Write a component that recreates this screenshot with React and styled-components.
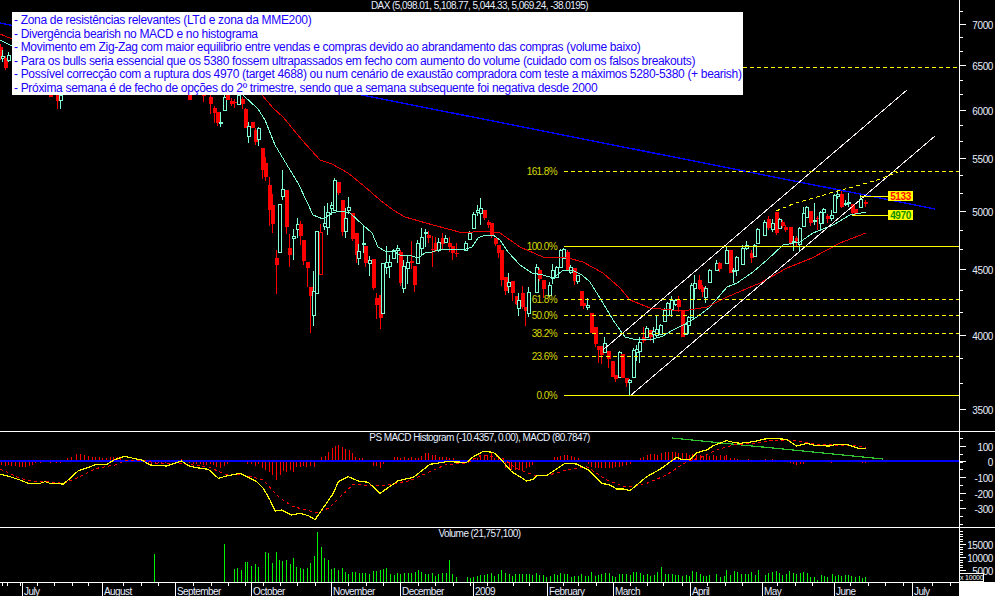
import React from "react";
import styled, { createGlobalStyle } from "styled-components";

const AQUA = "#7fffd4";
const RED = "#ff0000";
const YELLOW = "#ffff00";

const GlobalStyle = createGlobalStyle`
  html, body { margin: 0; padding: 0; background: #000; }
  body { font-family: "Liberation Sans", Arial, sans-serif; overflow: hidden; }
`;

const Page = styled.div`
  width: 995px;
  height: 596px;
  background: #000;
  display: flex;
  flex-direction: column;
  overflow: hidden;
`;
const Pane = styled.section`
  height: ${(p) => p.$height}px;
  display: flex;
  box-sizing: border-box;
  border-top: ${(p) => (p.$ruled ? "1px solid #fff" : "none")};
`;
const Plot = styled.div`
  position: relative;
  width: 959px;
  height: 100%;
`;
const ChartSvg = styled.svg`
  display: block;
  width: 959px;
  height: 100%;
  shape-rendering: crispEdges;
  font-family: "Liberation Sans", Arial, sans-serif;
`;
const AxisColumn = styled.div`
  position: relative;
  width: 36px;
  height: 100%;
  box-sizing: border-box;
  border-left: 1px solid #fff;
`;
const AxisSvg = styled.svg`
  display: block;
  width: 35px;
  height: 100%;
  shape-rendering: crispEdges;
  font-family: "Liberation Sans", Arial, sans-serif;
`;
const PaneTitle = styled.div`
  position: absolute;
  top: ${(p) => p.$top}px;
  left: 0;
  right: 0;
  text-align: center;
  color: #e6eeff;
  font-size: 10px;
  line-height: 12px;
  letter-spacing: -0.56px;
  white-space: nowrap;
`;
const NoteBox = styled.div`
  position: absolute;
  top: 12px;
  left: 12px;
  width: 731px;
  height: 83px;
  box-sizing: border-box;
  padding: 2px 0 0 2px;
  background: #fff;
  color: #1a00ff;
  font-size: 12px;
  line-height: 13.6px;
  letter-spacing: -0.32px;
  white-space: nowrap;
`;
const NoteLine = styled.div``;
const ScaleTag = styled.div`
  position: absolute;
  left: -1px;
  bottom: 0;
  width: 25px;
  height: 9px;
  box-sizing: border-box;
  border: 1px solid #fff;
  background: #000;
  color: #fff;
  font-size: 7px;
  line-height: 7px;
  letter-spacing: -0.2px;
  text-align: center;
  white-space: nowrap;
`;
const TimeRow = styled.div`
  height: 14px;
  display: flex;
`;
const TimeTrack = styled.div`
  width: 959px;
  border-top: 1px solid #fff;
  box-sizing: border-box;
`;
const Corner = styled.div`
  flex: 1;
  background: #fff;
`;
const TimeSvg = styled.svg`
  display: block;
  width: 959px;
  height: 13px;
  shape-rendering: crispEdges;
  font-family: "Liberation Sans", Arial, sans-serif;
`;

// kind, x, body top, body bottom, wick top, wick bottom (page pixels)
const candles = [
  ["r", 0, 47, 57, 44, 60], ["a", 2, 56, 58, 50, 62], ["r", 5, 58, 68, 56, 70], ["a", 8, 55, 60, 52, 62],
  ["r", 50, 95, 97, 95, 97], ["r", 57, 95, 101, 95, 109], ["a", 60, 95, 100, 95, 109],
  ["r", 189, 95, 100, 95, 100], ["r", 203, 95, 96, 95, 102],
  ["r", 210, 97, 104, 95, 114], ["r", 214, 108, 113, 106, 123], ["r", 217, 112, 123, 112, 126],
  ["a", 220, 122, 123, 112, 127], ["a", 224, 97, 110, 95, 111], ["r", 227, 95, 100, 95, 100],
  ["r", 231, 101, 104, 98, 106], ["r", 234, 102, 103, 99, 108], ["a", 238, 95, 104, 95, 105],
  ["r", 242, 99, 104, 97, 109], ["r", 245, 109, 128, 108, 128], ["a", 248, 126, 136, 122, 143],
  ["r", 252, 122, 128, 122, 128], ["r", 255, 130, 142, 128, 145], ["a", 258, 128, 139, 127, 146],
  ["r", 262, 148, 170, 148, 179], ["r", 265, 163, 177, 157, 181], ["r", 269, 185, 210, 177, 226],
  ["r", 272, 205, 224, 194, 233], ["r", 276, 258, 265, 250, 294], ["a", 279, 204, 252, 204, 252],
  ["a", 282, 189, 196, 170, 200], ["r", 286, 190, 227, 190, 234], ["r", 289, 248, 255, 234, 267],
  ["a", 293, 236, 238, 229, 260], ["a", 297, 224, 229, 218, 238], ["r", 300, 224, 236, 221, 245],
  ["r", 303, 240, 261, 240, 265], ["r", 307, 262, 268, 262, 287], ["r", 310, 287, 296, 287, 333],
  ["a", 313, 291, 315, 271, 326], ["a", 316, 231, 293, 231, 293], ["h", 320, 232, 274, 224, 274],
  ["a", 324, 223, 226, 206, 230], ["a", 327, 212, 227, 203, 235], ["a", 331, 205, 208, 202, 215],
  ["a", 334, 180, 210, 178, 211], ["r", 338, 182, 193, 182, 195], ["r", 342, 200, 232, 200, 236],
  ["a", 345, 218, 231, 208, 238], ["a", 348, 207, 210, 197, 214], ["r", 352, 213, 239, 213, 241],
  ["r", 356, 233, 255, 233, 263], ["a", 358, 251, 258, 244, 265], ["a", 363, 243, 244, 225, 253],
  ["r", 365, 246, 263, 246, 267], ["a", 369, 260, 263, 256, 276], ["r", 373, 259, 288, 259, 290],
  ["r", 376, 298, 305, 293, 319], ["r", 380, 295, 318, 295, 329], ["a", 382, 263, 313, 263, 313],
  ["a", 386, 262, 267, 246, 274], ["a", 389, 262, 266, 255, 278], ["a", 393, 250, 258, 249, 259],
  ["a", 397, 248, 250, 245, 263], ["r", 400, 252, 283, 250, 286], ["a", 403, 266, 288, 260, 293],
  ["a", 407, 262, 268, 256, 284], ["r", 411, 261, 263, 241, 269], ["r", 414, 266, 285, 266, 292],
  ["a", 417, 243, 263, 240, 264], ["a", 421, 237, 248, 228, 255], ["a", 425, 232, 233, 229, 247],
  ["r", 428, 235, 238, 231, 243], ["r", 432, 249, 250, 236, 267], ["r", 435, 243, 251, 237, 252],
  ["a", 438, 242, 250, 238, 252], ["r", 442, 238, 244, 233, 250], ["a", 445, 238, 242, 235, 243],
  ["r", 449, 243, 247, 237, 252], ["r", 452, 246, 253, 246, 260], ["r", 456, 253, 253, 243, 257],
  ["a", 465, 243, 250, 241, 251], ["a", 469, 233, 239, 231, 240], ["a", 473, 214, 228, 212, 229],
  ["a", 477, 210, 212, 205, 216], ["a", 480, 208, 213, 198, 225], ["r", 484, 210, 218, 210, 220],
  ["r", 488, 222, 225, 220, 228], ["r", 491, 223, 235, 223, 238], ["r", 495, 238, 244, 238, 246],
  ["r", 498, 245, 253, 245, 258], ["r", 501, 250, 280, 250, 286], ["r", 505, 277, 291, 277, 295],
  ["a", 508, 282, 286, 273, 293], ["r", 512, 281, 293, 281, 301], ["r", 516, 296, 304, 296, 305],
  ["a", 518, 300, 308, 293, 316], ["r", 522, 293, 307, 286, 309], ["r", 525, 307, 311, 307, 326],
  ["a", 528, 292, 313, 287, 317], ["a", 536, 267, 292, 264, 293], ["r", 539, 270, 279, 268, 281],
  ["r", 543, 280, 289, 280, 298], ["a", 549, 285, 295, 282, 297], ["a", 552, 270, 278, 264, 284],
  ["a", 556, 267, 277, 266, 278], ["a", 560, 250, 267, 249, 268], ["a", 563, 249, 258, 248, 259],
  ["r", 567, 252, 270, 250, 270], ["a", 570, 267, 272, 265, 274], ["r", 574, 268, 281, 268, 285],
  ["a", 577, 275, 281, 275, 284], ["r", 581, 291, 306, 291, 306], ["r", 583, 303, 306, 301, 309],
  ["a", 587, 305, 307, 298, 310], ["r", 591, 313, 333, 313, 333], ["r", 595, 327, 344, 327, 347],
  ["r", 598, 346, 350, 346, 363], ["r", 601, 346, 355, 346, 364], ["a", 604, 343, 352, 337, 353],
  ["r", 608, 351, 359, 351, 368], ["r", 612, 361, 377, 361, 377], ["r", 615, 375, 379, 375, 382],
  ["a", 619, 352, 377, 351, 378], ["r", 622, 354, 378, 354, 378], ["r", 626, 378, 383, 378, 387],
  ["a", 629, 380, 382, 379, 395], ["a", 633, 350, 377, 348, 378], ["a", 636, 349, 352, 345, 361],
  ["a", 639, 342, 351, 337, 363], ["r", 643, 337, 341, 327, 343], ["a", 646, 328, 337, 326, 338],
  ["r", 650, 330, 337, 330, 341], ["a", 653, 331, 334, 327, 343], ["a", 656, 329, 335, 316, 338],
  ["a", 660, 325, 334, 324, 335], ["a", 664, 310, 321, 308, 322], ["a", 667, 303, 315, 302, 316],
  ["a", 671, 300, 309, 296, 317], ["a", 675, 300, 304, 299, 306], ["r", 678, 300, 307, 296, 312],
  ["r", 682, 311, 337, 311, 337], ["a", 685, 324, 334, 323, 335], ["a", 688, 317, 325, 316, 334],
  ["a", 691, 285, 317, 283, 318], ["a", 694, 283, 288, 275, 300], ["r", 699, 280, 289, 275, 290],
  ["r", 702, 287, 292, 285, 297], ["a", 705, 288, 297, 286, 303], ["a", 709, 270, 282, 269, 283],
  ["a", 716, 263, 270, 260, 271], ["r", 719, 263, 269, 262, 272], ["a", 726, 250, 263, 247, 264],
  ["r", 730, 250, 273, 250, 273], ["a", 733, 270, 271, 268, 283], ["a", 736, 257, 270, 256, 276],
  ["a", 742, 248, 264, 245, 265], ["a", 746, 245, 248, 241, 250], ["r", 751, 253, 258, 250, 263],
  ["a", 754, 245, 256, 244, 257], ["a", 757, 229, 243, 228, 244], ["a", 764, 222, 235, 220, 236],
  ["r", 768, 219, 228, 216, 230], ["a", 772, 223, 229, 219, 232], ["r", 776, 212, 233, 212, 235],
  ["a", 779, 219, 228, 218, 229], ["r", 782, 222, 226, 220, 228], ["r", 785, 227, 230, 225, 232],
  ["r", 790, 227, 243, 227, 245], ["a", 793, 241, 242, 236, 251], ["r", 796, 238, 241, 236, 246],
  ["a", 799, 228, 244, 227, 251], ["a", 803, 213, 226, 207, 227], ["a", 806, 207, 217, 206, 218],
  ["r", 810, 211, 223, 211, 226], ["a", 814, 220, 221, 203, 225], ["r", 817, 218, 219, 216, 230],
  ["a", 820, 212, 223, 211, 230], ["a", 823, 209, 212, 208, 224], ["r", 827, 216, 219, 214, 223],
  ["a", 831, 215, 218, 210, 221], ["a", 834, 195, 212, 194, 213], ["a", 837, 194, 196, 190, 199],
  ["r", 841, 194, 207, 190, 208], ["a", 845, 203, 204, 200, 206], ["a", 848, 202, 203, 193, 207],
  ["r", 852, 204, 213, 204, 215], ["r", 855, 209, 214, 209, 216], ["a", 860, 199, 207, 195, 208],
  ["r", 865, 202, 204, 200, 207],
];

const aquaAverage = "0,40 12,46 243,95 258,109 265,120 275,145 287,165 298,183 307,202 313,215 323,219 332,213 340,211 350,213 363,225 372,233 378,247 385,251 393,251 400,255 412,256 418,258 425,253 432,252 442,249 463,250 472,247 478,238 485,235 493,235 500,240 508,252 520,265 532,273 543,275 553,278 562,271 572,270 582,275 590,282 603,303 613,320 625,337 633,339 653,339 663,336 673,330 683,325 697,317 710,307 727,287 737,283 753,272 767,260 783,245 800,242 813,233 833,225 850,215 866,212";
const redAverage = "0,34 12,39 262,95 273,108 283,117 302,140 320,160 332,164 348,173 364,186 380,200 393,210 405,217 433,225 463,233 483,231 500,233 520,247 543,257 568,258 583,262 603,273 620,288 630,300 650,308 683,311 707,307 727,297 760,283 787,268 812,258 840,243 866,233";
const resistanceCurve = "776,211 793,204 817,197 837,191 853,187 877,180 898,172";

const fibLevels = [
  { label: "161.8%", y: 171, dashed: true },
  { label: "100.0%", y: 246 },
  { label: "61.8%", y: 299, dashed: true },
  { label: "50.0%", y: 315, dashed: true },
  { label: "38.2%", y: 333, dashed: true },
  { label: "23.6%", y: 356, dashed: true },
  { label: "0.0%", y: 395 },
];

const notes = [
  "- Zona de resistências relevantes (LTd e zona da MME200)",
  "- Divergência bearish no MACD e no histograma",
  "- Movimento em Zig-Zag com maior equilibrio entre vendas e compras devido ao abrandamento das compras (volume baixo)",
  "- Para os bulls seria essencial que os 5380 fossem ultrapassados em fecho com aumento do volume (cuidado com os falsos breakouts)",
  "- Possível correcção com a ruptura dos 4970 (target 4688) ou num cenário de exaustão compradora com teste a máximos 5280-5380 (+ bearish)",
  "- Próxima semana é de fecho de opções do 2º trimestre, sendo que a semana subsequente foi negativa desde 2000",
];

// lower panes were measured on a 3x crop starting at y=425
const pageY = (z) => 425 + z / 3;
const joinPoints = (rows, originX) => rows.map(([x, y]) => `${originX + x / 3},${pageY(y)}`).join(" ");

const histLeft = [[5,120],[15,122],[25,120],[35,122],[47,122],[57,125],[67,127],[77,127],[87,122],[97,120],[107,115],[120,113],[152,113],[170,113],[180,113],[203,100],[215,97],[228,88],[240,87],[253,90],[265,92],[278,97],[287,97],[297,97],[308,100],[320,100],[330,97],[340,97],[352,97],[362,97],[445,114],[455,116],[465,118],[475,114],[485,118],[495,114],[545,102],[568,115],[580,118],[590,116],[600,118],[610,120],[620,120],[630,118],[640,120],[650,125],[660,130],[672,122],[682,118],[712,105],[743,116],[753,118],[765,122],[775,118],[787,128],[797,135],[808,142],[818,150],[830,165],[840,150],[850,138],[860,140],[870,135],[880,140],[890,125],[900,125],[910,122],[920,125],[930,122],[942,125],[965,95],[975,92],[985,80],[997,70],[1005,62],[1016,60],[1027,65],[1037,72],[1047,75],[1057,85],[1067,97],[1077,100],[1088,100],[1120,122],[1130,122],[1140,130],[1150,118],[1183,97],[1192,97],[1202,100],[1214,97],[1224,100],[1234,97],[1245,100],[1255,100],[1265,92],[1276,85],[1286,85],[1298,90],[1307,90],[1318,95],[1328,97],[1339,97],[1349,100],[1360,100],[1370,105],[1380,105],[1390,105],[1420,100],[1432,100],[1441,90],[1452,90],[1463,90],[1474,85],[1484,100],[1495,100]];
const histRight = [[15,130],[27,130],[35,135],[45,135],[57,135],[68,135],[78,128],[88,125],[98,120],[108,112],[163,97],[171,95],[182,92],[193,90],[203,90],[214,92],[224,97],[234,100],[265,118],[275,125],[286,130],[295,130],[305,130],[315,130],[327,130],[337,130],[347,125],[358,125],[368,122],[380,120],[390,118],[412,105],[420,100],[431,95],[441,90],[452,88],[462,88],[472,90],[484,85],[495,82],[505,82],[516,80],[526,82],[536,85],[547,85],[558,85],[568,90],[578,87],[590,90],[600,90],[610,93],[620,90],[628,93],[640,90],[650,93],[662,90],[673,93],[680,90],[692,100],[703,100],[713,103],[725,107],[735,105],[745,103],[765,107],[775,107],[785,105],[796,103],[806,105],[817,103],[828,105],[838,107],[870,114],[880,118],[890,120],[900,118],[911,116],[995,113],[1065,112],[1078,112],[1087,113],[1097,113]];
const macdLeft = [[0,147],[30,155],[60,165],[85,175],[120,175],[135,170],[150,175],[190,177],[210,160],[235,137],[265,127],[290,118],[320,118],[345,103],[375,94],[400,100],[425,105],[450,120],[500,123],[545,108],[565,122],[590,128],[625,133],[655,160],[680,153],[720,145],[770,170],[790,190],[810,225],[825,258],[845,255],[875,270],[900,265],[925,272],[945,284],[1000,205],[1015,170],[1045,155],[1075,168],[1105,172],[1140,205],[1195,167],[1240,157],[1290,118],[1340,110],[1400,112],[1420,95],[1450,79],[1480,82],[1500,100]];
const macdRight = [[35,140],[80,168],[100,163],[110,152],[140,152],[165,135],[195,115],[230,117],[265,135],[305,175],[330,180],[350,192],[370,192],[390,197],[440,155],[480,133],[530,97],[545,103],[570,103],[590,83],[620,75],[640,62],[680,47],[700,52],[720,55],[760,50],[795,42],[815,40],[860,43],[890,63],[920,55],[950,62],[990,63],[1010,58],[1040,58],[1075,70],[1097,70]];
const signalLeft = [[0,133],[30,145],[60,160],[100,168],[145,170],[190,175],[240,155],[290,130],[345,120],[380,105],[430,105],[470,115],[540,115],[580,120],[625,125],[675,148],[720,147],[790,165],[840,220],[880,245],[950,263],[985,250],[1060,178],[1140,183],[1230,167],[1290,140],[1340,118],[1400,115],[1440,92],[1500,95]];
const signalRight = [[50,130],[100,150],[140,152],[200,135],[260,125],[320,165],[380,187],[440,175],[500,150],[560,110],[600,98],[650,75],[700,60],[760,55],[820,45],[870,45],[900,50],[950,58],[1000,60],[1050,60],[1097,67]];
const volumeLeft = [[463,387],[673,357],[703,432],[713,430],[725,435],[737,411],[743,411],[755,423],[766,417],[775,426],[797,381],[806,384],[817,414],[829,381],[838,405],[848,408],[860,405],[870,417],[880,399],[890,426],[901,429],[910,432],[922,429],[931,414],[943,393],[952,321],[965,366],[974,399],[985,405],[995,432],[1004,429],[1016,435],[1027,429],[1037,441],[1046,447],[1056,441],[1067,441],[1077,444],[1087,444],[1096,444],[1108,447],[1120,438],[1130,438],[1140,435],[1150,432],[1160,429],[1172,447],[1183,450],[1192,444],[1202,447],[1214,444],[1224,444],[1234,444],[1245,441],[1255,435],[1265,441],[1276,447],[1286,447],[1298,444],[1307,453],[1316,447],[1328,444],[1339,444],[1349,405],[1358,447],[1369,456],[1402,456],[1411,459],[1420,456],[1432,453],[1441,450],[1452,450],[1463,447],[1474,444],[1484,453],[1495,447]];
const volumeRight = [[5,435],[15,444],[27,447],[37,453],[47,447],[57,447],[68,447],[78,447],[88,447],[98,450],[108,444],[118,450],[130,450],[139,456],[150,453],[163,447],[171,450],[182,444],[193,447],[203,447],[214,456],[224,453],[234,453],[245,447],[257,453],[265,453],[275,441],[286,453],[295,450],[305,447],[315,444],[327,444],[337,453],[347,456],[358,447],[368,447],[380,447],[390,450],[400,441],[410,441],[420,444],[431,450],[441,447],[452,453],[462,450],[472,441],[484,426],[495,447],[505,447],[516,447],[526,450],[536,450],[547,453],[558,450],[568,453],[578,438],[590,441],[600,447],[610,453],[620,453],[628,450],[650,447],[662,456],[673,453],[680,435],[692,450],[703,438],[713,441],[725,447],[735,447],[745,447],[755,441],[765,450],[775,435],[796,450],[806,444],[817,441],[828,438],[838,444],[848,450],[858,447],[868,438],[880,444],[890,447],[900,444],[911,441],[922,444],[932,456],[942,456],[953,465],[965,450],[973,453],[983,456],[996,447],[1005,453],[1015,450],[1025,453],[1035,450],[1045,450],[1055,453],[1065,456],[1078,453],[1087,459],[1097,456]];

const months = [
  ["July", 22], ["August", 102], ["September", 175], ["October", 251], ["November", 331], ["December", 400],
  ["2009", 473], ["February", 547], ["March", 613], ["April", 690], ["May", 762], ["June", 834], ["July", 912],
];
const weekTicks = [2,7,20,37,54,72,88,123,141,158,193,211,228,245,263,280,297,315,348,366,383,418,435,453,470,487,513,529,563,578,596,630,647,663,682,707,725,742,777,795,812,850,868,885,903,932,950];

const priceY = (v) => 24 + 555.4 * Math.log(7000 / v);
const priceLabels = [7000, 6500, 6000, 5500, 5000, 4500, 4000, 3500].map((v) => ({ y: Math.round(priceY(v)), text: String(v) }));
const priceMinors = [];
for (let v = 7500; v >= 3334; v -= 500 / 3) priceMinors.push(Math.round(priceY(v)));

const macdLabels = [["100", 446], ["0", 461], ["-100", 477], ["-200", 493], ["-300", 508]].map(([text, y]) => ({ text, y }));
const macdMinors = [];
for (let i = -2; i <= 10; i++) macdMinors.push(Math.round(446 + i * 7.75));

const volumeLabels = [["15000", 544], ["10000", 557], ["5000", 570]].map(([text, y]) => ({ text, y }));
const volumeMinors = [];
for (let y = 531; y < 572; y += 2.6) volumeMinors.push(Math.round(y));

const Candle = ({ kind, x, top, bottom, wickTop, wickBottom }) => {
  const color = kind === "a" ? AQUA : RED;
  const height = Math.max(bottom - top, 1);
  return (
    <g>
      <line x1={x + 0.5} x2={x + 0.5} y1={wickTop} y2={wickBottom} stroke={color} />
      {kind === "r" ? (
        <rect x={x - 1} y={top} width={4} height={height} fill={color} />
      ) : (
        <rect x={x - 0.5} y={top + 0.5} width={3} height={height} fill="#000" stroke={color} />
      )}
    </g>
  );
};

const PriceTag = ({ y, text, color, fromX }) => (
  <g>
    <line x1={fromX} x2={888} y1={y} y2={y} stroke={YELLOW} />
    <rect x={888} y={y - 5} width={25} height={10} fill={YELLOW} />
    <text x={900.5} y={y + 3.5} textAnchor="middle" fontSize="10" letterSpacing="-0.4" fontWeight="700" fill={color}>{text}</text>
  </g>
);

const PriceChart = () => (
  <ChartSvg viewBox="0 0 959 431">
    {candles.map(([kind, x, top, bottom, wickTop, wickBottom], i) => (
      <Candle key={i} kind={kind} x={x} top={top} bottom={bottom} wickTop={wickTop} wickBottom={wickBottom} />
    ))}
    <polyline points={aquaAverage} fill="none" stroke={AQUA} />
    <polyline points={redAverage} fill="none" stroke="#e80000" />
    <line x1={0} y1={23} x2={935} y2={209} stroke="#0000ff" strokeWidth="1.4" />
    <line x1={630} y1={396} x2={935} y2={136} stroke="#f6eeee" />
    <line x1={603} y1={350} x2={907} y2={90} stroke="#f6eeee" />
    <line x1={743} x2={959} y1={67} y2={67} stroke={YELLOW} strokeDasharray="4 3" />
    <polyline points={resistanceCurve} fill="none" stroke={YELLOW} strokeDasharray="4 3" />
    {fibLevels.map((f) => (
      <g key={f.label}>
        <line x1={564} x2={959} y1={f.y} y2={f.y} stroke={YELLOW} strokeDasharray={f.dashed ? "4 3" : undefined} />
        <text x={557} y={f.y + 4} textAnchor="end" fontSize="10" letterSpacing="-0.6" fill="#d8d800">{f.label}</text>
      </g>
    ))}
    <PriceTag y={196} text="5133" color="#ff1000" fromX={860} />
    <PriceTag y={215} text="4970" color="#109000" fromX={852} />
  </ChartSvg>
);

const Macd = () => (
  <ChartSvg viewBox="0 432 959 95">
    {[[histLeft, 0], [histRight, 500]].flatMap(([rows, origin]) =>
      rows.map(([x, y]) => (
        <line key={`${origin}-${x}`} x1={origin + x / 3} x2={origin + x / 3} y1={461} y2={pageY(y)} stroke={RED} />
      ))
    )}
    <line x1={0} x2={959} y1={461} y2={461} stroke="#0000ff" strokeWidth="1.4" />
    <line x1={672} y1={438} x2={883} y2={459} stroke="#30c030" strokeWidth="1.2" />
    <polyline points={`${joinPoints(signalLeft, 0)} ${joinPoints(signalRight, 500)}`} fill="none" stroke={RED} strokeDasharray="3 3" />
    <polyline points={`${joinPoints(macdLeft, 0)} ${joinPoints(macdRight, 500)}`} fill="none" stroke={YELLOW} strokeWidth="1.2" />
  </ChartSvg>
);

const Volume = () => (
  <ChartSvg viewBox="0 528 959 54">
    {[[volumeLeft, 0], [volumeRight, 500]].flatMap(([rows, origin]) =>
      rows.map(([x, y]) => (
        <line key={`${origin}-${x}`} x1={origin + x / 3} x2={origin + x / 3} y1={582} y2={pageY(y)} stroke="#00f000" />
      ))
    )}
  </ChartSvg>
);

const Axis = ({ top, height, minors, labels }) => (
  <AxisSvg viewBox={`0 ${top} 35 ${height}`}>
    {minors.map((y, i) => (
      <line key={i} x1={0} x2={3} y1={y + 0.5} y2={y + 0.5} stroke="#fff" />
    ))}
    {labels.map((l) => (
      <g key={l.text}>
        <line x1={0} x2={6} y1={l.y + 0.5} y2={l.y + 0.5} stroke="#fff" />
        <text x={33} y={l.y + 4.5} textAnchor="end" fontSize="10" letterSpacing="-0.4" fill="#e6eeff">{l.text}</text>
      </g>
    ))}
  </AxisSvg>
);

const TimeAxis = () => (
  <TimeSvg viewBox="0 583 959 13">
    {weekTicks.map((x) => (
      <line key={x} x1={x + 0.5} x2={x + 0.5} y1={583} y2={586} stroke="#fff" />
    ))}
    {months.map(([name, x]) => (
      <g key={x}>
        <line x1={x + 0.5} x2={x + 0.5} y1={583} y2={596} stroke="#fff" />
        <text x={x + 2} y={595} fontSize="10" letterSpacing="-0.56" fill="#e6eeff">{name}</text>
      </g>
    ))}
  </TimeSvg>
);

export default function App() {
  return (
    <Page>
      <GlobalStyle />
      <Pane $height={431}>
        <Plot>
          <PriceChart />
          <PaneTitle $top={0}>DAX (5,098.01, 5,108.77, 5,044.33, 5,069.24, -38.0195)</PaneTitle>
          <NoteBox>
            {notes.map((text) => (
              <NoteLine key={text}>{text}</NoteLine>
            ))}
          </NoteBox>
        </Plot>
        <AxisColumn>
          <Axis top={0} height={431} minors={priceMinors} labels={priceLabels} />
        </AxisColumn>
      </Pane>
      <Pane $height={96} $ruled>
        <Plot>
          <Macd />
          <PaneTitle $top={0}>PS MACD Histogram (-10.4357, 0.00), MACD (80.7847)</PaneTitle>
        </Plot>
        <AxisColumn>
          <Axis top={432} height={95} minors={macdMinors} labels={macdLabels} />
        </AxisColumn>
      </Pane>
      <Pane $height={55} $ruled>
        <Plot>
          <Volume />
          <PaneTitle $top={0}>Volume (21,757,100)</PaneTitle>
        </Plot>
        <AxisColumn>
          <Axis top={528} height={54} minors={volumeMinors} labels={volumeLabels} />
          <ScaleTag>x 10000</ScaleTag>
        </AxisColumn>
      </Pane>
      <TimeRow>
        <TimeTrack>
          <TimeAxis />
        </TimeTrack>
        <Corner />
      </TimeRow>
    </Page>
  );
}
